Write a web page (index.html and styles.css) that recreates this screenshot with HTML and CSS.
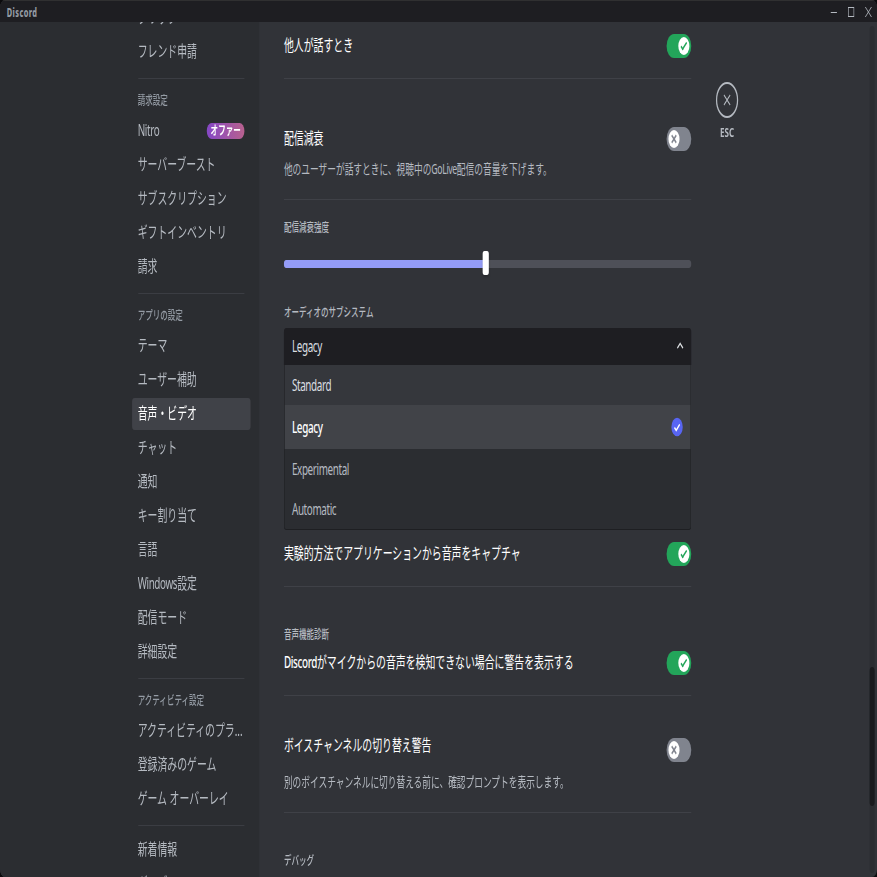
FILE: index.html
```
<!DOCTYPE html>
<html lang="ja">
<head>
  <meta charset="UTF-8" />
  <meta name="viewport" content="width=device-width, initial-scale=1.0" />
  <title>Discord</title>
  <link rel="stylesheet" href="styles.css">
</head>
<body>
  <!-- shared switch faces -->
  <svg class="sprite" width="0" height="0">
    <symbol id="knob-on" viewBox="0 0 20 20">
      <path fill="#23a55a" d="M7.89561 14.8538L6.30462 13.2629L14.3099 5.25755L15.9009 6.84854L7.89561 14.8538Z" />
      <path fill="#23a55a" d="M4.08643 11.0903L5.67742 9.49929L9.4485 13.2704L7.85751 14.8614L4.08643 11.0903Z" />
    </symbol>
    <symbol id="knob-off" viewBox="0 0 20 20">
      <path fill="#80848e" d="M5.13231 6.72963L6.7233 5.13864L14.855 13.2704L13.264 14.8614L5.13231 6.72963Z" />
      <path fill="#80848e" d="M13.2704 5.13864L14.8614 6.72963L6.72963 14.8614L5.13864 13.2704L13.2704 5.13864Z" />
    </symbol>
  </svg>

  <div class="window">
    <header class="titlebar">
      <span class="wordmark">Discord</span>
      <div class="window-buttons">
        <svg width="12" height="12" viewBox="0 0 12 12"><path fill="currentColor" d="M1 6h10v1H1z" /></svg>
        <svg width="12" height="12" viewBox="0 0 12 12"><rect x="1.5" y="1.5" width="9" height="9" fill="none" stroke="currentColor" /></svg>
        <svg width="12" height="12" viewBox="0 0 12 12"><path d="M1 1l10 10M11 1L1 11" fill="none" stroke="currentColor" /></svg>
      </div>
    </header>

    <div class="layout">
      <nav class="sidebar">
        <div class="menu">
          <div class="item">クリップ</div>
          <div class="item">フレンド申請</div>
          <div class="separator"></div>
          <div class="menu-header">請求設定</div>
          <div class="item"><span class="latin">Nitro</span> <span class="badge">オファー</span></div>
          <div class="item">サーバーブースト</div>
          <div class="item">サブスクリプション</div>
          <div class="item">ギフトインベントリ</div>
          <div class="item">請求</div>
          <div class="separator"></div>
          <div class="menu-header">アプリの設定</div>
          <div class="item">テーマ</div>
          <div class="item">ユーザー補助</div>
          <div class="item selected">音声・ビデオ</div>
          <div class="item">チャット</div>
          <div class="item">通知</div>
          <div class="item">キー割り当て</div>
          <div class="item">言語</div>
          <div class="item"><span><span class="latin">Windows</span>設定</span></div>
          <div class="item">配信モード</div>
          <div class="item">詳細設定</div>
          <div class="separator"></div>
          <div class="menu-header">アクティビティ設定</div>
          <div class="item">アクティビティのプラ...</div>
          <div class="item">登録済みのゲーム</div>
          <div class="item">ゲーム オーバーレイ</div>
          <div class="separator"></div>
          <div class="item">新着情報</div>
          <div class="item">グッズ</div>
        </div>
      </nav>

      <main class="content">
        <section class="setting others">
          <div class="row">
            <h3>他人が話すとき</h3>
            <div class="switch on"><svg class="knob"><use href="#knob-on" /></svg></div>
          </div>
        </section>

        <section class="setting attenuation">
          <div class="row">
            <h3>配信減衰</h3>
            <div class="switch"><svg class="knob"><use href="#knob-off" /></svg></div>
          </div>
          <p class="note">他のユーザーが話すときに、視聴中の<span class="latin">GoLive</span>配信の音量を下げます。</p>
        </section>

        <h5 class="label strength">配信減衰強度</h5>
        <div class="slider">
          <div class="fill" style="width: 49.5%"></div>
          <div class="grabber"></div>
        </div>

        <h5 class="label subsystem">オーディオのサブシステム</h5>
        <div class="select">
          <div class="select-value">
            <span class="latin">Legacy</span>
            <svg width="18" height="18" viewBox="0 0 18 18"><path d="M4.5 11.2L9 6.5l4.500 4.700" fill="none" stroke="#dbdee1" stroke-width="1.700" /></svg>
          </div>
          <div class="options">
            <div class="option hover latin">Standard</div>
            <div class="option active latin">
              <span>Legacy</span>
              <svg width="20" height="20" viewBox="0 0 20 20">
                <circle cx="10" cy="10" r="9.200" fill="#5865f2" />
                <path d="M5.800 10.500l2.800 2.900 5.700-6" fill="none" stroke="#fff" stroke-width="1.900" />
              </svg>
            </div>
            <div class="option latin">Experimental</div>
            <div class="option latin">Automatic</div>
          </div>
        </div>

        <section class="setting capture">
          <div class="row">
            <h3>実験的方法でアプリケーションから音声をキャプチャ</h3>
            <div class="switch on"><svg class="knob"><use href="#knob-on" /></svg></div>
          </div>
        </section>

        <h5 class="label diagnostics">音声機能診断</h5>
        <section class="setting mic-warning">
          <div class="row">
            <h3><span class="latin">Discord</span>がマイクからの音声を検知できない場合に警告を表示する</h3>
            <div class="switch on"><svg class="knob"><use href="#knob-on" /></svg></div>
          </div>
        </section>

        <section class="setting channel-warning">
          <div class="row">
            <h3>ボイスチャンネルの切り替え警告</h3>
            <div class="switch"><svg class="knob"><use href="#knob-off" /></svg></div>
          </div>
          <p class="note">別のボイスチャンネルに切り替える前に、確認プロンプトを表示します。</p>
        </section>

        <h5 class="label debug">デバッグ</h5>
      </main>

      <aside class="tools">
        <div class="close">
          <svg width="18" height="18" viewBox="0 0 18 18"><path d="M4 4l10 10M14 4L4 14" fill="none" stroke="currentColor" stroke-width="1.500" /></svg>
        </div>
        <div class="keybind">ESC</div>
      </aside>

      <div class="scrollbar"><div class="thumb"></div></div>
    </div>
  </div>
</body>
</html>
```

FILE: styles.css
```
* {
  box-sizing: border-box;
}

html {
  overflow: hidden;
}

body {
  margin: 0;
  width: 877px;
  height: 877px;
  overflow: hidden;
  background: #0b0b0d;
  font-family: "Noto Sans", "Noto Sans CJK JP", sans-serif;
  font-size: 16px;
  color: #dbdee1;
}

h3,
h5,
p {
  margin: 0;
}

svg {
  display: block;
  flex-shrink: 0;
}

.sprite {
  position: absolute;
}

/* the window is laid out at 1421px and squeezed to the viewport */
.window {
  display: flex;
  flex-direction: column;
  width: 1421px;
  height: 877px;
  overflow: hidden;
  border-radius: 8px;
  background: #313338;
  transform: scaleX(0.6172);
  transform-origin: 0 0;
  white-space: nowrap;
}

.latin {
  letter-spacing: -0.6px;
}

.titlebar {
  display: flex;
  justify-content: space-between;
  align-items: center;
  height: 22px;
  flex-shrink: 0;
  padding-left: 11px;
  background: #1e1e22;
  border-top: 1px solid #303031;
}

.wordmark {
  font-size: 12px;
  line-height: 20px;
  font-weight: 800;
  letter-spacing: 0.6px;
  color: #949ba4;
  padding-top: 2px;
}

.window-buttons {
  display: flex;
  color: #b5bac1;
}

.window-buttons svg {
  margin: 0 8px;
}

.layout {
  display: flex;
  flex: 1;
  min-height: 0;
}

/* sidebar */
.sidebar {
  display: flex;
  justify-content: flex-end;
  width: 420px;
  flex-shrink: 0;
  padding-right: 14px;
  overflow: hidden;
  background: #2b2d31;
}

.menu {
  width: 192px;
  margin-top: -20px;
}

.item {
  display: flex;
  justify-content: space-between;
  align-items: center;
  height: 32px;
  padding: 0 10px 2px 9px;
  margin-bottom: 2px;
  border-radius: 4px;
  line-height: 20px;
  color: #b5bac1;
}

.item.selected {
  background: #404248;
  color: #fff;
}

.separator {
  height: 1px;
  margin: 10px 10px 8px;
  background: #3b3d43;
}

.menu-header {
  height: 28px;
  padding: 6px 9px;
  font-size: 12.2px;
  line-height: 16px;
  font-weight: 500;
  color: #949ba4;
}

.badge {
  height: 16px;
  margin-top: 2px;
  padding: 0 6px;
  border-radius: 8px;
  background: linear-gradient(90deg, #8547c6, #b8618e);
  color: #fff;
  font-size: 12.2px;
  line-height: 16px;
  font-weight: 700;
}

/* content */
.content {
  width: 740px;
  flex-shrink: 0;
  padding: 0 40px;
}

.setting {
  border-bottom: 1px solid #3f4147;
}

.row {
  display: flex;
  justify-content: space-between;
  height: 24px;
}

.row h3 {
  font-size: 16px;
  line-height: 22px;
  font-weight: 400;
  color: #fff;
}

.row h3 .latin {
  font-weight: 500;
}

.note {
  font-size: 14.1px;
  line-height: 20px;
  color: #b5bac1;
}

.label {
  font-size: 12.2px;
  line-height: 16px;
  font-weight: 500;
  color: #b5bac1;
}

.others {
  padding: 12px 0 20px;
}

.attenuation {
  padding: 48px 0 20px;
}

.attenuation .note {
  margin-top: 8px;
}

.strength {
  margin-top: 20px;
}

.slider {
  display: flex;
  align-items: center;
  height: 8px;
  margin-top: 24px;
  border-radius: 4px;
  background: #4e5058;
}

.fill {
  height: 8px;
  border-radius: 4px 0 0 4px;
  background: #949cf7;
}

.grabber {
  width: 10px;
  height: 24px;
  margin-left: -5px;
  margin-top: -2px;
  border-radius: 3px;
  background: #fff;
  box-shadow: 0 2px 3px rgba(0, 0, 0, 0.2);
}

.subsystem {
  margin-top: 37px;
}

.select {
  margin-top: 7px;
}

.select-value {
  display: flex;
  justify-content: space-between;
  align-items: center;
  height: 37px;
  padding: 0 9px 2px 13px;
  border-radius: 4px 4px 0 0;
  background: #1e1e22;
}

.options {
  height: 165px;
  border: 1px solid #1e1f22;
  border-top: 0;
  border-radius: 0 0 4px 4px;
  background: #2b2d31;
  overflow: hidden;
}

.option {
  display: flex;
  justify-content: space-between;
  align-items: center;
  height: 40px;
  padding: 0 12px;
  color: #b5bac1;
}

.option.hover {
  background: #35373c;
  color: #dbdee1;
}

.option.active {
  height: 44px;
  background: #414348;
  color: #fff;
  font-weight: 500;
}

.capture {
  padding: 12px 0 20px;
}

.diagnostics {
  margin-top: 40px;
}

.mic-warning {
  padding: 8px 0 20px;
}

.channel-warning {
  padding: 42px 0 20px;
}

.channel-warning h3 {
  margin-top: -4px;
}

.channel-warning .note {
  margin-top: 10px;
}

.debug {
  margin-top: 40px;
}

.switch {
  width: 40px;
  height: 24px;
  padding: 3px;
  border-radius: 14px;
  background: #80848e;
}

.switch.on {
  background: #23a55a;
}

.knob {
  width: 18px;
  height: 18px;
  border-radius: 50%;
  background: #fff;
}

.switch.on .knob {
  margin-left: 16px;
}

/* close button */
.tools {
  display: flex;
  flex-direction: column;
  align-items: center;
  width: 36px;
  padding-top: 60px;
  color: #b5bac1;
}

.close {
  display: flex;
  justify-content: center;
  align-items: center;
  width: 36px;
  height: 36px;
  border: 2px solid #b5bac1;
  border-radius: 50%;
}

.keybind {
  margin-top: 4px;
  font-size: 13px;
  line-height: 20px;
  font-weight: 700;
}

.scrollbar {
  width: 8px;
  margin: 4px 4px 4px auto;
  border-radius: 4px;
  background: #2b2d31;
}

.thumb {
  height: 139px;
  margin-top: 641px;
  border-radius: 4px;
  background: #1a1b1e;
}
```
